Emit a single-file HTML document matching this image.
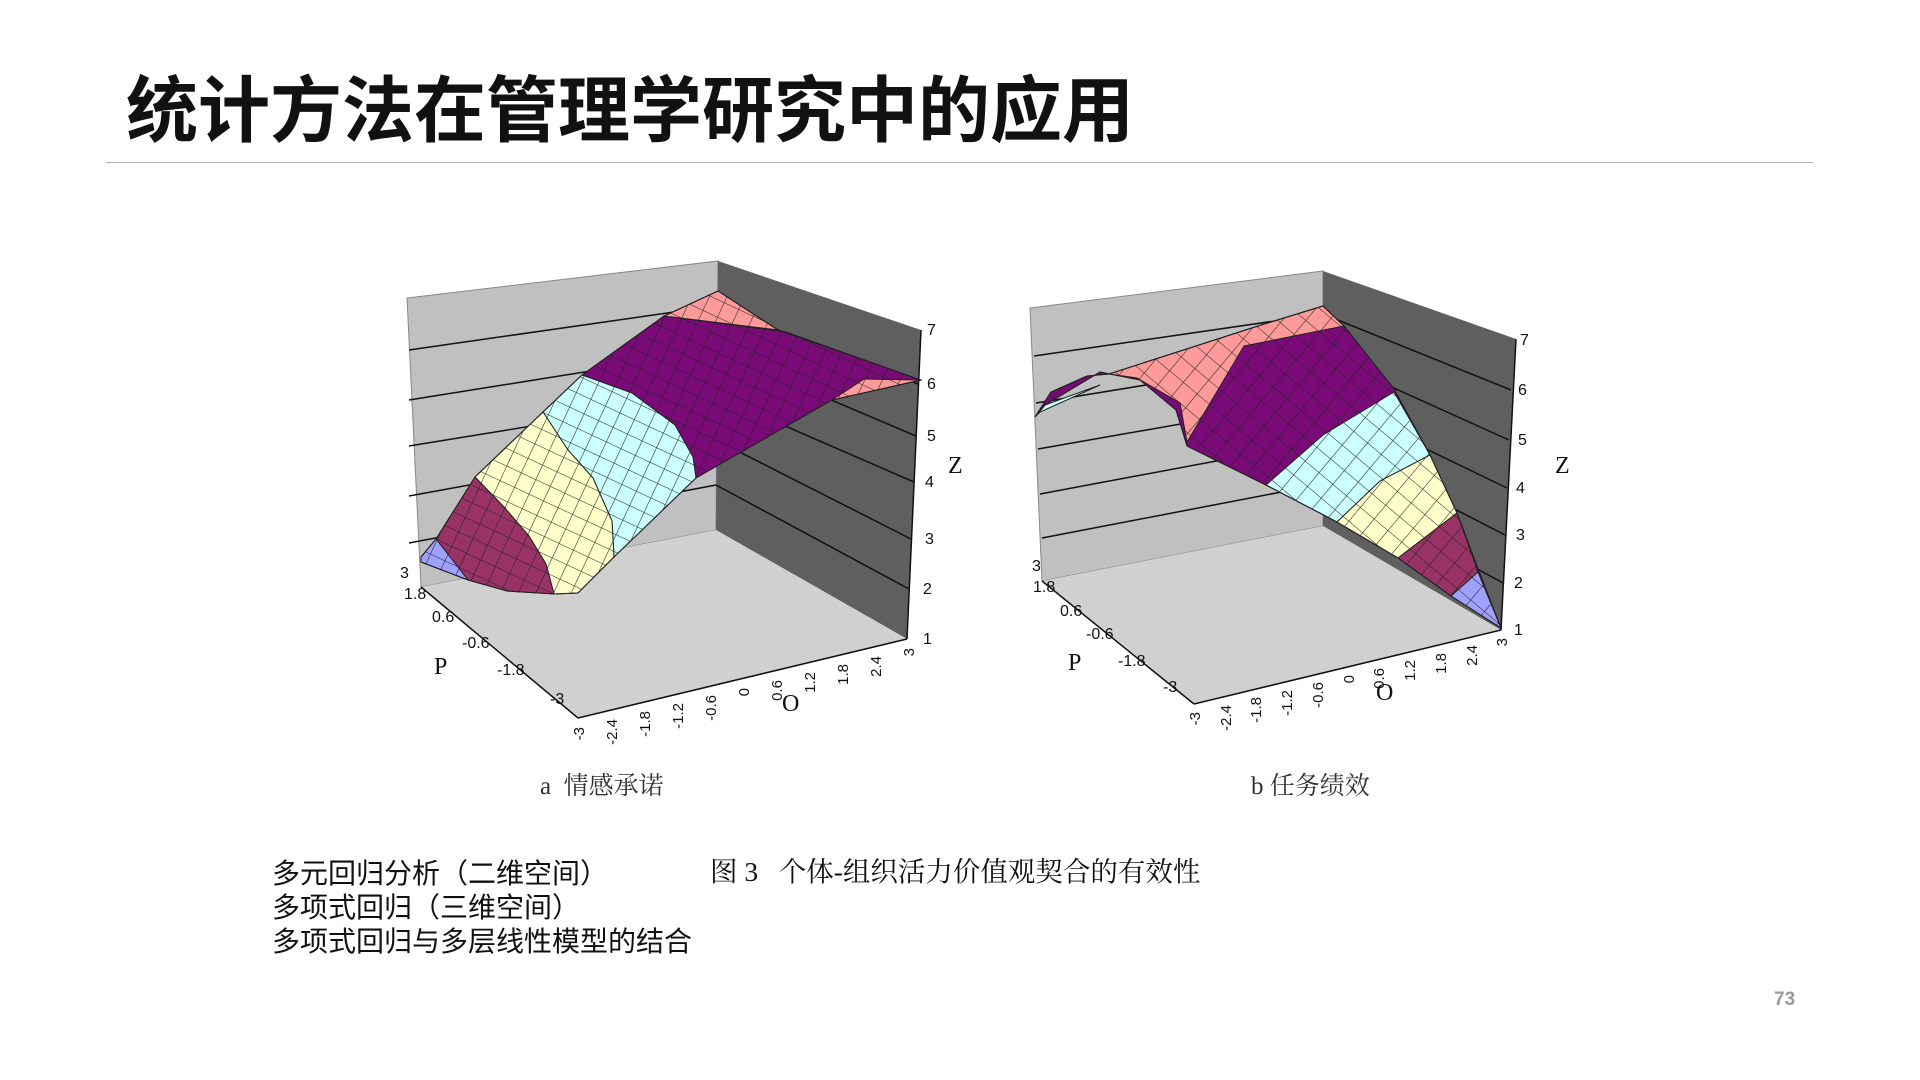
<!DOCTYPE html>
<html><head><meta charset="utf-8"><style>
html,body{margin:0;padding:0;background:#fff;}
body{width:1920px;height:1080px;position:relative;overflow:hidden;font-family:"Liberation Sans","Noto Sans CJK SC",sans-serif;}
.t{position:absolute;white-space:nowrap;}
#title{left:126px;top:60px;font-size:72px;font-weight:bold;color:#111;font-family:"Noto Sans CJK SC",sans-serif;letter-spacing:0px;line-height:90px;}
#rule{position:absolute;left:106px;top:162px;width:1707px;height:1px;background:#b0b0b0;}
.serif{font-family:"Liberation Serif","Noto Serif CJK SC",serif;color:#333;}
.bul{left:272px;font-size:28px;color:#111;font-family:"Noto Sans CJK SC",sans-serif;line-height:34px;}
</style></head><body>
<div class="t" id="title">统计方法在管理学研究中的应用</div>
<div id="rule"></div>

<svg width="1920" height="1080" style="position:absolute;left:0;top:0" xmlns="http://www.w3.org/2000/svg">
<defs>
<pattern id="ha" width="16" height="16" patternUnits="userSpaceOnUse" patternTransform="rotate(25)">
<path d="M0 0H16M0 0V16" stroke="#222" stroke-width="1.1" fill="none"/></pattern>
<pattern id="hb" width="18" height="18" patternUnits="userSpaceOnUse" patternTransform="rotate(40)">
<path d="M0 0H18M0 0V18" stroke="#222" stroke-width="1.1" fill="none"/></pattern>
</defs>
<g font-family="Liberation Sans, sans-serif" font-size="16" fill="#111">
<!-- Chart A -->
<polygon points="407,298 718,261 716,530 421,587" fill="#c0c0c0" stroke="#888"/>
<polygon points="718,261 921,330 907,639 716,530" fill="#5f5f5f"/>
<polygon points="421,587 716,530 907,639 578,718" fill="#d0d0d0"/>
<g stroke="#111" stroke-width="1.5">
<line x1="409" y1="543" x2="716" y2="485"/><line x1="409" y1="496" x2="716" y2="440"/>
<line x1="409" y1="446" x2="716" y2="396"/><line x1="409" y1="400" x2="716" y2="351"/>
<line x1="409" y1="350" x2="716" y2="306"/>
<line x1="716" y1="485" x2="909" y2="589"/><line x1="716" y1="440" x2="911" y2="539"/>
<line x1="716" y1="396" x2="914" y2="482"/><line x1="716" y1="351" x2="916" y2="436"/>
<line x1="716" y1="306" x2="918" y2="384"/>
<line x1="921" y1="330" x2="907" y2="639"/>
<line x1="421" y1="587" x2="578" y2="718"/><line x1="578" y1="718" x2="907" y2="639"/>
</g>
<g stroke="#222" stroke-width="1">
<polygon points="582,375 664,316 786,332 921,380 832,400 696,478 693,457 675,425 632,393" fill="#7a0a78"/>
<polygon points="664,316 718,291 778,330" fill="#ff9a9a"/>
<polygon points="832,400 864,379 921,380" fill="#ff9a9a"/>
<polygon points="543,412 582,375 632,393 675,425 693,457 696,478 614,557 612,521 593,478 568,450" fill="#ccffff"/>
<polygon points="475,477 543,412 568,450 593,478 612,521 614,557 578,593 554,594 546,564 529,536 504,507" fill="#ffffcc"/>
<polygon points="436,539 475,477 504,507 529,536 546,564 554,594 507,591 468,580" fill="#993366"/>
<polygon points="421,557 436,539 468,580 421,562" fill="#a0a0ff"/>
<polygon points="421,557 436,539 475,477 543,412 582,375 664,316 718,291 778,330 921,380 832,400 696,478 614,557 578,593 554,594 507,591 468,580 421,562" fill="url(#ha)"/>
</g>
<g>
<text x="927" y="335">7</text><text x="927" y="389">6</text><text x="927" y="441">5</text>
<text x="925" y="487">4</text><text x="925" y="544">3</text><text x="923" y="594">2</text><text x="923" y="644">1</text>
<text x="400" y="578">3</text><text x="404" y="599">1.8</text><text x="432" y="622">0.6</text>
<text x="462" y="648">-0.6</text><text x="497" y="675">-1.8</text><text x="550" y="704">-3</text>
</g>
<g font-size="15">
<text transform="translate(584,727) rotate(-90)" text-anchor="end">-3</text>
<text transform="translate(617,719) rotate(-90)" text-anchor="end">-2.4</text>
<text transform="translate(650,711) rotate(-90)" text-anchor="end">-1.8</text>
<text transform="translate(683,703) rotate(-90)" text-anchor="end">-1.2</text>
<text transform="translate(716,695) rotate(-90)" text-anchor="end">-0.6</text>
<text transform="translate(749,688) rotate(-90)" text-anchor="end">0</text>
<text transform="translate(782,680) rotate(-90)" text-anchor="end">0.6</text>
<text transform="translate(815,672) rotate(-90)" text-anchor="end">1.2</text>
<text transform="translate(848,664) rotate(-90)" text-anchor="end">1.8</text>
<text transform="translate(881,656) rotate(-90)" text-anchor="end">2.4</text>
<text transform="translate(914,648) rotate(-90)" text-anchor="end">3</text>
</g>
<g font-family="Liberation Serif, serif" font-size="24">
<text x="434" y="674">P</text><text x="782" y="711">O</text><text x="948" y="473">Z</text>
</g>

<!-- Chart B -->
<polygon points="1030,308 1323,271 1323,526 1042,581" fill="#c0c0c0" stroke="#888"/>
<polygon points="1323,271 1516,339 1501,630 1323,526" fill="#5f5f5f"/>
<polygon points="1042,581 1323,526 1501,630 1194,704" fill="#d0d0d0"/>
<g stroke="#111" stroke-width="1.5">
<line x1="1042" y1="538" x2="1323" y2="484"/><line x1="1040" y1="494" x2="1323" y2="441"/>
<line x1="1038" y1="449" x2="1323" y2="399"/><line x1="1036" y1="403" x2="1323" y2="356"/>
<line x1="1034" y1="356" x2="1323" y2="314"/>
<line x1="1323" y1="484" x2="1503" y2="583"/><line x1="1323" y1="441" x2="1505" y2="535"/>
<line x1="1323" y1="399" x2="1507" y2="488"/><line x1="1323" y1="356" x2="1509" y2="440"/>
<line x1="1323" y1="314" x2="1511" y2="390"/>
<line x1="1516" y1="339" x2="1501" y2="630"/>
<line x1="1042" y1="581" x2="1194" y2="704"/><line x1="1194" y1="704" x2="1501" y2="630"/>
</g>
<g stroke="#222" stroke-width="1">
<polygon points="1035,417 1051,392 1087,376 1109,374 1258,326 1323,306 1344,326 1394,389 1430,455 1457,513 1480,574 1501,628 1451,596 1398,558 1337,522 1266,485 1187,446 1176,410 1140,380 1100,372 1045,405" fill="#7a0a78"/>
<polygon points="1035,417 1045,405 1100,385 1040,412" fill="#ccffff"/>
<polygon points="1109,374 1258,326 1323,306 1344,326 1244,346 1187,442 1180,403 1137,378" fill="#ff9a9a"/>
<polygon points="1394,392 1430,455 1380,481 1337,522 1266,485 1323,435" fill="#ccffff"/>
<polygon points="1430,455 1457,513 1398,558 1337,522 1380,481" fill="#ffffcc"/>
<polygon points="1457,513 1478,572 1451,596 1398,558" fill="#993366"/>
<polygon points="1478,572 1501,628 1451,596" fill="#a0a0ff"/>
<polygon points="1035,417 1051,392 1087,376 1109,374 1258,326 1323,306 1344,326 1394,389 1430,455 1457,513 1480,574 1501,628 1451,596 1398,558 1337,522 1266,485 1187,446 1176,410 1140,380 1100,372 1045,405" fill="url(#hb)"/>
</g>
<g>
<text x="1520" y="345">7</text><text x="1518" y="395">6</text><text x="1518" y="445">5</text>
<text x="1516" y="493">4</text><text x="1516" y="540">3</text><text x="1514" y="588">2</text><text x="1514" y="635">1</text>
<text x="1032" y="571">3</text><text x="1033" y="592">1.8</text><text x="1060" y="616">0.6</text>
<text x="1086" y="639">-0.6</text><text x="1118" y="666">-1.8</text><text x="1163" y="692">-3</text>
</g>
<g font-size="15">
<text transform="translate(1200,712) rotate(-90)" text-anchor="end">-3</text>
<text transform="translate(1231,705) rotate(-90)" text-anchor="end">-2.4</text>
<text transform="translate(1261,697) rotate(-90)" text-anchor="end">-1.8</text>
<text transform="translate(1292,690) rotate(-90)" text-anchor="end">-1.2</text>
<text transform="translate(1323,682) rotate(-90)" text-anchor="end">-0.6</text>
<text transform="translate(1354,675) rotate(-90)" text-anchor="end">0</text>
<text transform="translate(1384,668) rotate(-90)" text-anchor="end">0.6</text>
<text transform="translate(1415,660) rotate(-90)" text-anchor="end">1.2</text>
<text transform="translate(1446,653) rotate(-90)" text-anchor="end">1.8</text>
<text transform="translate(1477,645) rotate(-90)" text-anchor="end">2.4</text>
<text transform="translate(1507,638) rotate(-90)" text-anchor="end">3</text>
</g>
<g font-family="Liberation Serif, serif" font-size="24">
<text x="1068" y="670">P</text><text x="1376" y="700">O</text><text x="1555" y="473">Z</text>
</g>
</g>
</svg>

<div class="t serif" style="left:540px;top:766px;font-size:25px;">a&nbsp; 情感承诺</div>
<div class="t serif" style="left:1251px;top:766px;font-size:25px;">b 任务绩效</div>
<div class="t bul" style="top:855px;">多元回归分析（二维空间）</div>
<div class="t bul" style="top:889px;">多项式回归（三维空间）</div>
<div class="t bul" style="top:923px;">多项式回归与多层线性模型的结合</div>
<div class="t serif" style="left:710px;top:849px;font-size:27.5px;color:#111;">图 3&nbsp;&nbsp;&nbsp;个体-组织活力价值观契合的有效性</div>
<div class="t" style="left:1774px;top:989px;font-size:19px;font-weight:bold;color:#999;">73</div>
</body></html>
